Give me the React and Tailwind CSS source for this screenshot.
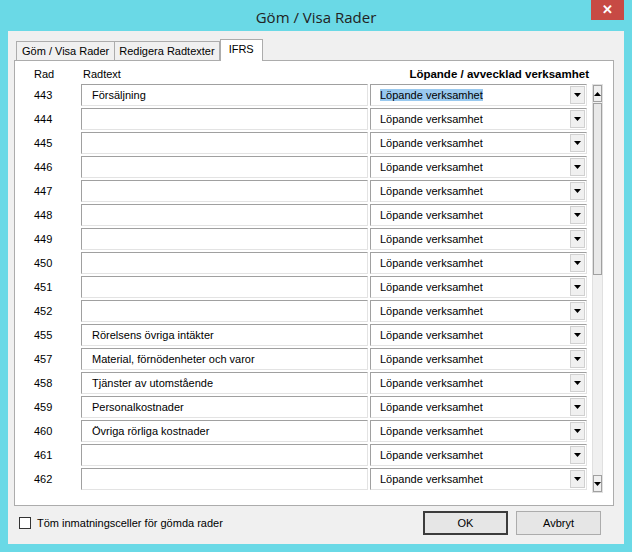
const rows = [
  ['443', 'Försäljning'], ['444', ''], ['445', ''], ['446', ''], ['447', ''], ['448', ''], ['449', ''],
  ['450', ''], ['451', ''], ['452', ''], ['455', 'Rörelsens övriga intäkter'],
  ['457', 'Material, förnödenheter och varor'], ['458', 'Tjänster av utomstående'],
  ['459', 'Personalkostnader'], ['460', 'Övriga rörliga kostnader'], ['461', ''], ['462', ''],
]

function Arrow({ up }) {
  return (
    <svg width="7" height="4" viewBox="0 0 7 4">
      <path d={up ? 'M0 4 L3.5 0 L7 4 Z' : 'M0 0 L7 0 L3.5 4 Z'} fill="#000" />
    </svg>
  )
}

export default function App() {
  return (
    <div className="w-[632px] h-[552px] bg-[#6ad9e6] flex flex-col text-[11px] text-black" style={{ fontFamily: '"Liberation Sans", Arial, sans-serif' }}>
      {/* title bar */}
      <div className="h-[31px] flex items-start relative">
        <div className="flex-1 text-center pt-[6px] text-[15px] text-[#222]" style={{ fontFamily: '"Open Sans", sans-serif' }}>Göm / Visa Rader</div>
        <div className="absolute right-[8px] top-0 w-[33px] h-[20px] bg-[#c74a44] text-white flex items-center justify-center text-[13px] font-bold">✕</div>
      </div>
      <div className="mx-[8px] mb-[8px] flex-1 bg-[#f0f0f0] flex flex-col">
        {/* tabs */}
        <div className="flex items-end pl-[8px] pt-[8px] h-[29px]">
          <div className="px-[5px] h-[19px] border border-[#acacac] border-b-0 bg-[#f0f0f0] leading-[18px]">Göm / Visa Rader</div>
          <div className="px-[4px] h-[19px] border border-[#acacac] border-b-0 border-l-0 bg-[#f0f0f0] leading-[18px]">Redigera Radtexter</div>
          <div className="px-[8px] h-[22px] border border-[#acacac] border-b-0 bg-white leading-[18px] relative top-[1px] z-10">IFRS</div>
        </div>
        <div className="ml-[6px] mr-[10px] h-[446px] border border-[#acacac] bg-white flex flex-col px-[11px] pt-[5px]">
          <div className="flex h-[17px] items-center">
            <div className="w-[55px] pl-[8px]">Rad</div>
            <div className="w-[287px] pl-[2px]">Radtext</div>
            <div className="w-[221px] text-right font-bold text-[11.5px]">Löpande / avvecklad verksamhet</div>
          </div>
          <div className="flex">
            <div className="flex flex-col">
              {rows.map(([n, t], i) => (
                <div key={n} className="flex h-[24px] items-center">
                  <div className="w-[55px] pl-[8px]">{n}</div>
                  <div className="w-[287px] h-[22px] border border-[#a0a0a0] border-r-[#e3e3e3] border-b-[#e3e3e3] bg-white pl-[10px] leading-[20px]">{t}</div>
                  <div className="w-[217px] h-[22px] ml-[2px] border border-[#a0a0a0] border-r-[#e3e3e3] border-b-[#e3e3e3] bg-white flex items-center">
                    <div className="flex-1 pl-[9px]">
                      {i === 0 ? <span className="bg-[#99c9ef]">Löpande verksamhet</span> : 'Löpande verksamhet'}
                    </div>
                    <div className="w-[15px] h-[18px] mr-[1px] bg-[#f0f0f0] border border-[#d0d0d0] flex items-center justify-center"><Arrow /></div>
                  </div>
                </div>
              ))}
            </div>
            <div className="ml-[5px] mt-[1px] w-[17px] h-[409px] bg-[#f0f0f0] border border-[#e0e0e0] flex flex-col">
              <div className="h-[17px] border border-[#a0a0a0] bg-[#f0f0f0] flex items-center justify-center"><Arrow up /></div>
              <div className="h-[172px] mt-[1px] border border-[#a0a0a0] bg-[#e8e8e8]" />
              <div className="flex-1" />
              <div className="h-[17px] border border-[#a0a0a0] bg-[#f0f0f0] flex items-center justify-center"><Arrow /></div>
            </div>
          </div>
        </div>
        {/* bottom */}
        <div className="flex items-center px-[11px] mt-[5px]">
          <div className="w-[12px] h-[12px] border border-[#333] bg-white" />
          <div className="ml-[6px]">Töm inmatningsceller för gömda rader</div>
          <div className="flex-1" />
          <div className="w-[85px] h-[24px] border-2 border-[#3c3c3c] bg-[#e6e6e6] flex items-center justify-center">OK</div>
          <div className="ml-[8px] mr-[12px] w-[85px] h-[24px] border border-[#acacac] bg-[#e6e6e6] flex items-center justify-center">Avbryt</div>
        </div>
      </div>
    </div>
  )
}
